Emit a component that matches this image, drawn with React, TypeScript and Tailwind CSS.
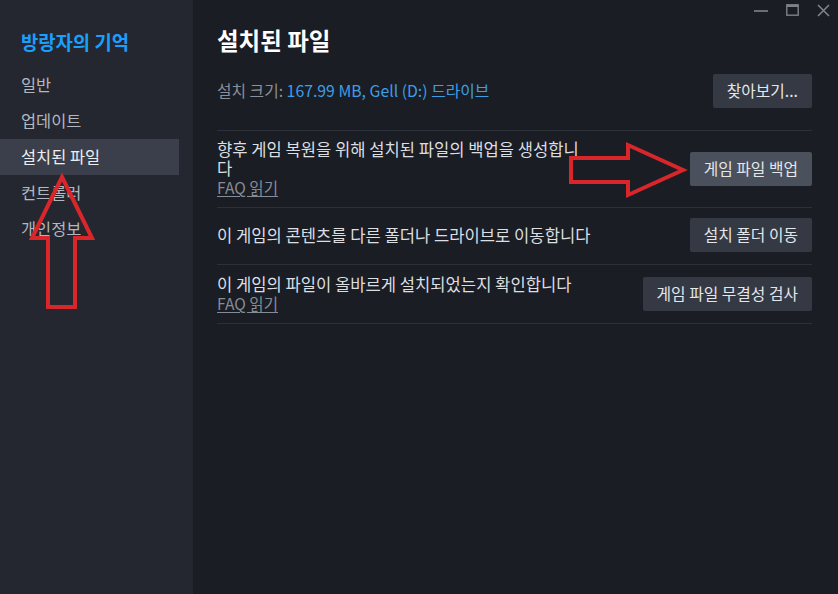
import React from "react";

const font = { fontFamily: '"Noto Sans CJK KR", "Noto Sans", sans-serif' };

function Btn({ children, active = false }: { children: React.ReactNode; active?: boolean }) {
  return (
    <button
      className={
        "h-[34px] shrink-0 rounded-[2px] px-[14px] text-[15.8px] leading-[34px] text-[#e4e6e9] " +
        (active ? "bg-[#4a505c]" : "bg-[#343944]")
      }
    >
      {children}
    </button>
  );
}

export default function App() {
  const side = ["일반", "업데이트", "설치된 파일", "컨트롤러", "개인정보"];
  return (
    <div className="relative flex h-[594px] w-[838px] overflow-hidden bg-[#1a1d24]" style={font}>
      {/* sidebar */}
      <div className="flex w-[193px] shrink-0 flex-col bg-[#24272f] pt-[29px]">
        <div className="pl-[21px] text-[18.8px] font-bold leading-[26px] text-[#1a9fff]">방랑자의 기억</div>
        <div className="mt-[12px] flex flex-col">
          {side.map((s, i) => (
            <div
              key={s}
              className={
                "mr-[14px] h-[36px] pl-[21px] text-[16.4px] leading-[34px] " +
                (i === 2 ? "bg-[#3a3f4b] text-[#eceef0]" : "text-[#b3b7be]")
              }
            >
              {s}
            </div>
          ))}
        </div>
      </div>

      {/* main */}
      <div className="flex flex-1 flex-col pl-[24px] pr-[26px]">
        <div className="-mr-[18px] flex h-[24px] items-start justify-end gap-[18px] pt-[4px]">
          <svg width="14" height="12" viewBox="0 0 14 12">
            <line x1="0" y1="7" x2="14" y2="7" stroke="#7d828a" strokeWidth="1.6" />
          </svg>
          <svg width="13" height="12" viewBox="0 0 13 12">
            <rect x="0.8" y="0.8" width="11.4" height="10.4" fill="none" stroke="#7d828a" strokeWidth="1.4" />
            <line x1="0.8" y1="2" x2="12.2" y2="2" stroke="#7d828a" strokeWidth="2" />
          </svg>
          <svg width="13" height="13" viewBox="0 0 13 13">
            <path d="M1 1 L12 12 M12 1 L1 12" stroke="#7d828a" strokeWidth="1.6" />
          </svg>
        </div>
        <div className="mt-[1px] text-[23.5px] font-bold leading-[30px] text-[#ffffff]">설치된 파일</div>

        <div className="mt-[19px] flex items-center justify-between border-b border-[#2c3039] pb-[22px]">
          <div className="text-[15.8px] leading-[20px]">
            <span className="text-[#8a9099]">설치 크기: </span>
            <span className="text-[#3d9ee8]">167.99 MB, Gell (D:) 드라이브</span>
          </div>
          <Btn>찾아보기...</Btn>
        </div>

        <div className="flex items-center justify-between border-b border-[#2c3039] pb-[10px] pt-[9px]">
          <div className="text-[16.6px] leading-[19px] text-[#dcdfe2]">
            <div>향후 게임 복원을 위해 설치된 파일의 백업을 생성합니</div>
            <div>다</div>
            <div className="text-[15.6px] text-[#868c95] underline underline-offset-2">FAQ 읽기</div>
          </div>
          <Btn active>게임 파일 백업</Btn>
        </div>

        <div className="flex items-center justify-between border-b border-[#2c3039] pb-[12px] pt-[10px]">
          <div className="text-[16.6px] leading-[19px] text-[#dcdfe2]">이 게임의 콘텐츠를 다른 폴더나 드라이브로 이동합니다</div>
          <Btn>설치 폴더 이동</Btn>
        </div>

        <div className="flex items-center justify-between border-b border-[#2c3039] py-[10px]">
          <div className="text-[16.6px] leading-[19px] text-[#dcdfe2]">
            <div>이 게임의 파일이 올바르게 설치되었는지 확인합니다</div>
            <div className="text-[15.6px] text-[#868c95] underline underline-offset-2">FAQ 읽기</div>
          </div>
          <Btn>게임 파일 무결성 검사</Btn>
        </div>
      </div>

      {/* annotation arrows */}
      <svg className="pointer-events-none absolute left-0 top-0" width="838" height="594" viewBox="0 0 838 594">
        <polygon
          points="62,177 92,238 75,238 75,307 48,307 48,238 32,238"
          fill="none"
          stroke="#d8262a"
          strokeWidth="4"
          strokeLinejoin="miter"
        />
        <polygon
          points="571,158 628,158 628,145 683,170 628,195 628,182 571,182"
          fill="none"
          stroke="#d8262a"
          strokeWidth="4"
          strokeLinejoin="miter"
        />
      </svg>
    </div>
  );
}
